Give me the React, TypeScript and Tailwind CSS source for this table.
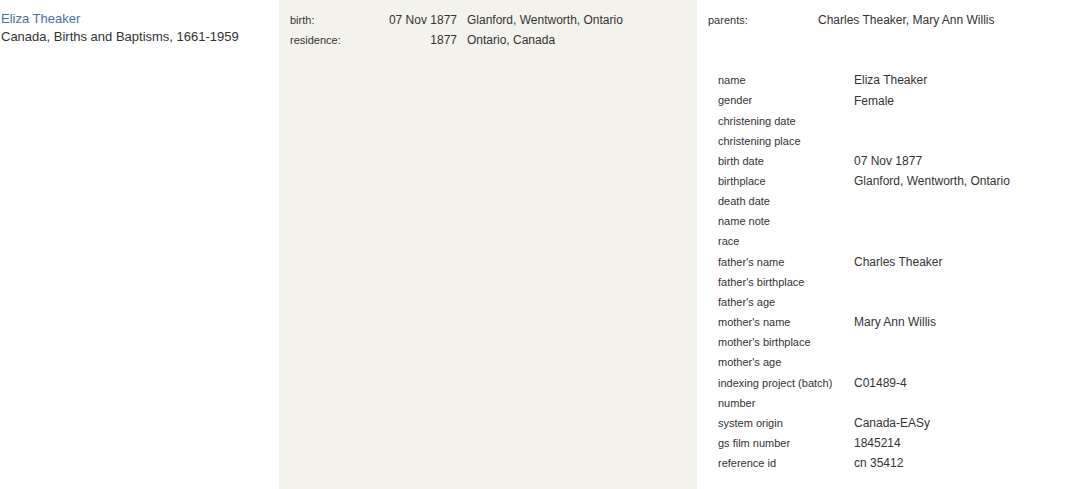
const EVENTS = [
  { label: "birth:", date: "07 Nov 1877", place: "Glanford, Wentworth, Ontario" },
  { label: "residence:", date: "1877", place: "Ontario, Canada" },
];

const DETAILS: [string, string][] = [
  ["name", "Eliza Theaker"],
  ["gender", "Female"],
  ["christening date", ""],
  ["christening place", ""],
  ["birth date", "07 Nov 1877"],
  ["birthplace", "Glanford, Wentworth, Ontario"],
  ["death date", ""],
  ["name note", ""],
  ["race", ""],
  ["father's name", "Charles Theaker"],
  ["father's birthplace", ""],
  ["father's age", ""],
  ["mother's name", "Mary Ann Willis"],
  ["mother's birthplace", ""],
  ["mother's age", ""],
  ["indexing project (batch)", "C01489-4"],
  ["number", ""],
  ["system origin", "Canada-EASy"],
  ["gs film number", "1845214"],
  ["reference id", "cn 35412"],
];

export default function App() {
  return (
    <div className="flex h-[489px] w-full bg-white font-['Liberation_Sans',Arial,sans-serif] text-[#333]">
      {/* Record title */}
      <div className="w-[279px] shrink-0 pl-px pt-[10px] text-[13px] leading-[18px]">
        <div className="text-[#4a6ea9]">Eliza Theaker</div>
        <div>Canada, Births and Baptisms, 1661-1959</div>
      </div>

      {/* Events */}
      <div className="w-[418px] shrink-0 bg-[#f3f2ec] pl-[11px] pt-[10px]">
        {EVENTS.map((e) => (
          <div key={e.label} className="flex h-[20px] items-center">
            <span className="w-[90px] text-[11px]">{e.label}</span>
            <span className="w-[77px] text-right text-[12px]">{e.date}</span>
            <span className="pl-[10px] text-[12px]">{e.place}</span>
          </div>
        ))}
      </div>

      {/* Relationships + details */}
      <div className="flex-1 pl-[11px] pt-[10px]">
        <div className="flex h-[20px] items-center">
          <span className="w-[110px] text-[11px]">parents:</span>
          <span className="text-[12px]">Charles Theaker, Mary Ann Willis</span>
        </div>
        <div className="pl-[10px] pt-[40.4px]">
          {DETAILS.map(([k, v]) => (
            <div key={k} className="flex h-[20.16px] items-center">
              <span className="w-[136px] text-[11px]">{k}</span>
              <span className="text-[12px]">{v}</span>
            </div>
          ))}
        </div>
      </div>
    </div>
  );
}
